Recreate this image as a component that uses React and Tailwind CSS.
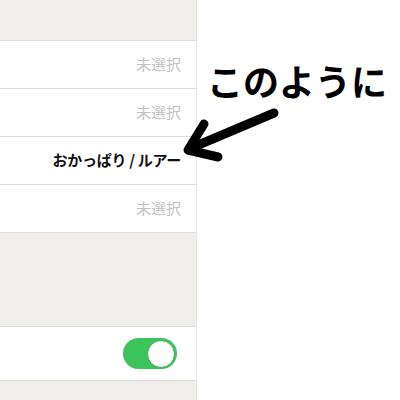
import React from 'react';

const jp = { fontFamily: '"Noto Sans CJK JP", "Noto Sans", sans-serif' };

// a single settings row with right-aligned value
const Row = ({ value, bold }) => (
  <div className="h-[48px] bg-white border-b border-[#dcdbd8] flex items-center justify-end pr-[15px]">
    <span
      className={
        bold
          ? 'text-[15px] font-bold text-[#111] tracking-[-0.3px]'
          : 'text-[15px] text-[#c2c2c2]'
      }
    >
      {value}
    </span>
  </div>
);

const Toggle = () => (
  <div className="w-[54px] h-[31px] rounded-full bg-[#3dc35c] flex items-center justify-end pr-[2px]">
    <div className="w-[28px] h-[28px] rounded-full bg-white border border-[#2fb14f]" />
  </div>
);

const App = () => {
  return (
    <div className="w-[400px] h-[400px] bg-white flex overflow-hidden relative" style={jp}>
      {/* settings panel */}
      <div className="w-[197px] flex flex-col border-r border-[#e6e5e2]">
        <div className="h-[41px] bg-[#efeeea] border-b border-[#dcdbd8]" />
        <Row value="未選択" />
        <Row value="未選択" />
        <Row value="おかっぱり / ルアー" bold />
        <Row value="未選択" />
        <div className="h-[94px] bg-[#efeeea] border-b border-[#dcdbd8]" />
        <div className="h-[54px] bg-white border-b border-[#dcdbd8] flex items-center justify-end pr-[19px]">
          <Toggle />
        </div>
        <div className="flex-1 bg-[#efeeea]" />
      </div>

      {/* annotation */}
      <div className="flex-1 pt-[62px] pl-[10px]">
        <div className="text-[36px] font-bold text-black leading-none">このように</div>
      </div>

      <svg className="absolute left-0 top-0" width="400" height="400" viewBox="0 0 400 400">
        <line x1="274" y1="113" x2="196" y2="146" stroke="#000" strokeWidth="9" strokeLinecap="round" />
        <path
          d="M204 124 L188 150 L218 157"
          fill="none"
          stroke="#000"
          strokeWidth="9"
          strokeLinecap="round"
          strokeLinejoin="round"
        />
      </svg>
    </div>
  );
};

export default App;
